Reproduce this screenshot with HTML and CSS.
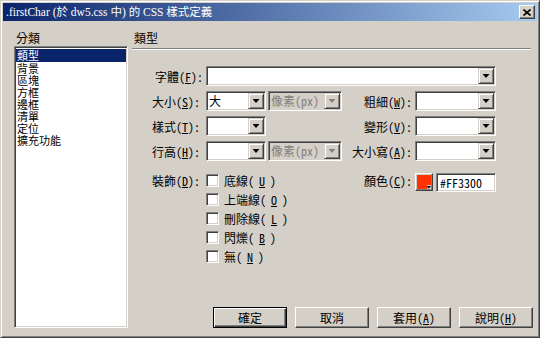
FILE: index.html
```html
<!DOCTYPE html>
<html lang="zh-Hant">
<head>
    <meta charset="UTF-8">
    <title>CSS 樣式定義</title>
    <link rel="stylesheet" href="styles.css">
</head>
<body>
<div class="window">
    <div class="titlebar">
        <span class="title">.firstChar (於 dw5.css 中) 的 CSS 樣式定義</span>
        <span class="close">
            <svg width="8" height="7" viewBox="0 0 8 7"><path d="M0.5 0.5 L7.5 6.5 M7.5 0.5 L0.5 6.5" stroke="#000" stroke-width="1.6" fill="none"/></svg>
        </span>
    </div>
    <div class="content">
        <div class="category">
            <div class="caption">分類</div>
            <ul class="listbox">
                <li class="selected">類型</li>
                <li>背景</li>
                <li>區塊</li>
                <li>方框</li>
                <li>邊框</li>
                <li>清單</li>
                <li>定位</li>
                <li>擴充功能</li>
            </ul>
        </div>
        <div class="panel">
            <div class="caption heading">類型</div>
            <div class="rule"></div>
            <div class="form">
                <label class="lbl">字體(<u>F</u>):</label>
                <div class="combo wide"><span class="value"></span><span class="arrow"></span></div>

                <label class="lbl">大小(<u>S</u>):</label>
                <div class="combo"><span class="value">大</span><span class="arrow"></span></div>
                <div class="combo unit disabled"><span class="value">像素(px)</span><span class="arrow"></span></div>
                <label class="lbl">粗細(<u>W</u>):</label>
                <div class="combo"><span class="value"></span><span class="arrow"></span></div>

                <label class="lbl">樣式(<u>T</u>):</label>
                <div class="combo"><span class="value"></span><span class="arrow"></span></div>
                <span></span>
                <label class="lbl">變形(<u>V</u>):</label>
                <div class="combo"><span class="value"></span><span class="arrow"></span></div>

                <label class="lbl">行高(<u>H</u>):</label>
                <div class="combo"><span class="value"></span><span class="arrow"></span></div>
                <div class="combo unit disabled"><span class="value">像素(px)</span><span class="arrow"></span></div>
                <label class="lbl">大小寫(<u>A</u>):</label>
                <div class="combo"><span class="value"></span><span class="arrow"></span></div>

                <label class="lbl deco-lbl">裝飾(<u>D</u>):</label>
                <div class="checks">
                    <div class="check"><span class="box"></span>底線(<u>U</u>)</div>
                    <div class="check"><span class="box"></span>上端線(<u>O</u>)</div>
                    <div class="check"><span class="box"></span>刪除線(<u>L</u>)</div>
                    <div class="check"><span class="box"></span>閃爍(<u>B</u>)</div>
                    <div class="check"><span class="box"></span>無(<u>N</u>)</div>
                </div>
                <label class="lbl deco-lbl">顏色(<u>C</u>):</label>
                <div class="color-row">
                    <span class="swatch">
                        <svg width="14" height="14" viewBox="0 0 14 14">
                            <polygon points="0,0 14,0 14,10 10,10 10,14 0,14" fill="#ff3300"/>
                            <polygon points="9.5,11 14,11 11.75,13.5" fill="#000"/>
                        </svg>
                    </span>
                    <span class="field">#FF3300</span>
                </div>
            </div>
            <div class="buttons">
                <span class="btn default">確定</span>
                <span class="btn">取消</span>
                <span class="btn">套用(<u>A</u>)</span>
                <span class="btn">說明(<u>H</u>)</span>
            </div>
        </div>
    </div>
</div>
</body>
</html>
```

FILE: styles.css
```css
* {
    box-sizing: border-box;
}
body {
    margin: 0;
    background: #d4d0c8;
    font-family: "Noto Sans Mono CJK TC", "Noto Sans CJK TC", sans-serif;
    font-size: 12px;
    color: #000;
}
u {
    text-decoration: underline;
}

/* window frame */
.window {
    width: 540px;
    height: 338px;
    display: flex;
    flex-direction: column;
    background: #d4d0c8;
    border: 1px solid;
    border-color: #d4d0c8 #404040 #404040 #d4d0c8;
    box-shadow: inset 1px 1px #fff, inset -1px -1px #808080;
    padding: 2px;
}
.titlebar {
    height: 18px;
    display: flex;
    align-items: center;
    justify-content: space-between;
    padding: 0 2px 0 3px;
    background: linear-gradient(to right, #0a246a, #a6caf0);
}
.title {
    color: #fff;
    font-family: "Liberation Serif", "Noto Sans CJK TC", serif;
    font-size: 11.5px;
    line-height: 14px;
    white-space: nowrap;
}
.close {
    width: 16px;
    height: 14px;
    display: flex;
    align-items: center;
    justify-content: center;
    background: #d4d0c8;
    border: 1px solid;
    border-color: #fff #404040 #404040 #fff;
    box-shadow: inset -1px -1px #808080;
}

/* body of dialog */
.content {
    flex: 1;
    display: flex;
    gap: 4px;
    padding: 10px 4px 7px 11px;
}
.category {
    width: 114px;
    display: flex;
    flex-direction: column;
}
.caption {
    height: 14px;
    line-height: 14px;
    padding-left: 2px;
    margin-bottom: 1px;
}
.listbox {
    flex: 1;
    margin: 0;
    padding: 2px 1px 1px 1px;
    list-style: none;
    background: #fff;
    border: 1px solid;
    border-color: #808080 #fff #fff #808080;
    box-shadow: inset 1px 1px #404040, inset -1px -1px #d4d0c8;
}
.listbox li {
    height: 12px;
    font-size: 11px;
    line-height: 12px;
    padding-left: 1px;
}
.listbox .selected {
    height: 13px;
    background: #0a246a;
    color: #fff;
}

.panel {
    flex: 1;
    display: flex;
    flex-direction: column;
}
.heading {
    padding-left: 2px;
}
.rule {
    height: 2px;
    margin: 2px 2px 0 0;
    border-top: 1px solid #808080;
    border-bottom: 1px solid #fff;
}

/* form grid */
.form {
    margin-top: 16px;
    display: grid;
    grid-template-columns: 74px 60px 76px 73px 81px;
    grid-template-rows: 20px 20px 20px 20px auto;
    row-gap: 5px;
}
.lbl {
    display: flex;
    align-items: center;
    justify-content: flex-end;
    padding-right: 3px;
    white-space: nowrap;
}
.form .lbl:nth-of-type(2n) {
    padding-right: 6px;
}
.deco-lbl {
    align-items: flex-start;
    margin-top: 8px;
    height: 13px;
    line-height: 13px;
}

.combo {
    height: 20px;
    display: flex;
    padding: 1px;
    background: #fff;
    border: 1px solid;
    border-color: #808080 #fff #fff #808080;
    box-shadow: inset 1px 1px #404040, inset -1px -1px #d4d0c8;
}
.combo.wide {
    grid-column: 2 / 6;
}
.combo.unit {
    width: 74px;
    justify-self: end;
}
.combo .value {
    flex: 1;
    line-height: 16px;
    padding-left: 1px;
    white-space: nowrap;
    overflow: hidden;
}
.combo .arrow {
    width: 16px;
    height: 16px;
    display: flex;
    align-items: center;
    justify-content: center;
    background: #d4d0c8;
    border: 1px solid;
    border-color: #d4d0c8 #404040 #404040 #d4d0c8;
    box-shadow: inset 1px 1px #fff, inset -1px -1px #808080;
}
.combo .arrow::after {
    content: "";
    width: 7px;
    height: 4px;
    background: #000;
    clip-path: polygon(0 0, 100% 0, 50% 100%);
}
.combo.disabled {
    background: #d4d0c8;
}
.combo.disabled .value {
    color: #808080;
}
.combo.disabled .arrow::after {
    background: #808080;
}

/* decoration checkboxes */
.checks {
    grid-column: 2 / 4;
    margin-top: 8px;
    display: flex;
    flex-direction: column;
    gap: 6px;
}
.check {
    height: 13px;
    line-height: 13px;
    display: flex;
    align-items: center;
    gap: 5px;
}
.box {
    width: 13px;
    height: 13px;
    background: #fff;
    border: 1px solid;
    border-color: #808080 #fff #fff #808080;
    box-shadow: inset 1px 1px #404040, inset -1px -1px #d4d0c8;
}

/* colour picker */
.color-row {
    margin-top: 7px;
    display: flex;
    gap: 3px;
    align-self: start;
}
.swatch {
    width: 18px;
    height: 18px;
    display: flex;
    align-items: center;
    justify-content: center;
    border: 1px solid;
    border-color: #fff #404040 #404040 #fff;
    box-shadow: inset -1px -1px #808080;
}
.field {
    width: 60px;
    height: 19px;
    line-height: 15px;
    padding: 1px 3px;
    background: #fff;
    border: 1px solid;
    border-color: #808080 #fff #fff #808080;
    box-shadow: inset 1px 1px #404040, inset -1px -1px #d4d0c8;
}

/* bottom buttons */
.buttons {
    margin-top: auto;
    display: flex;
    justify-content: flex-end;
    gap: 8px;
}
.btn {
    width: 74px;
    height: 21px;
    display: flex;
    align-items: center;
    justify-content: center;
    border: 1px solid;
    border-color: #fff #404040 #404040 #fff;
    box-shadow: inset -1px -1px #808080;
}
.btn.default {
    border-color: #000;
    box-shadow: inset 1px 1px #fff, inset -1px -1px #404040, inset -2px -2px #808080;
}
```
